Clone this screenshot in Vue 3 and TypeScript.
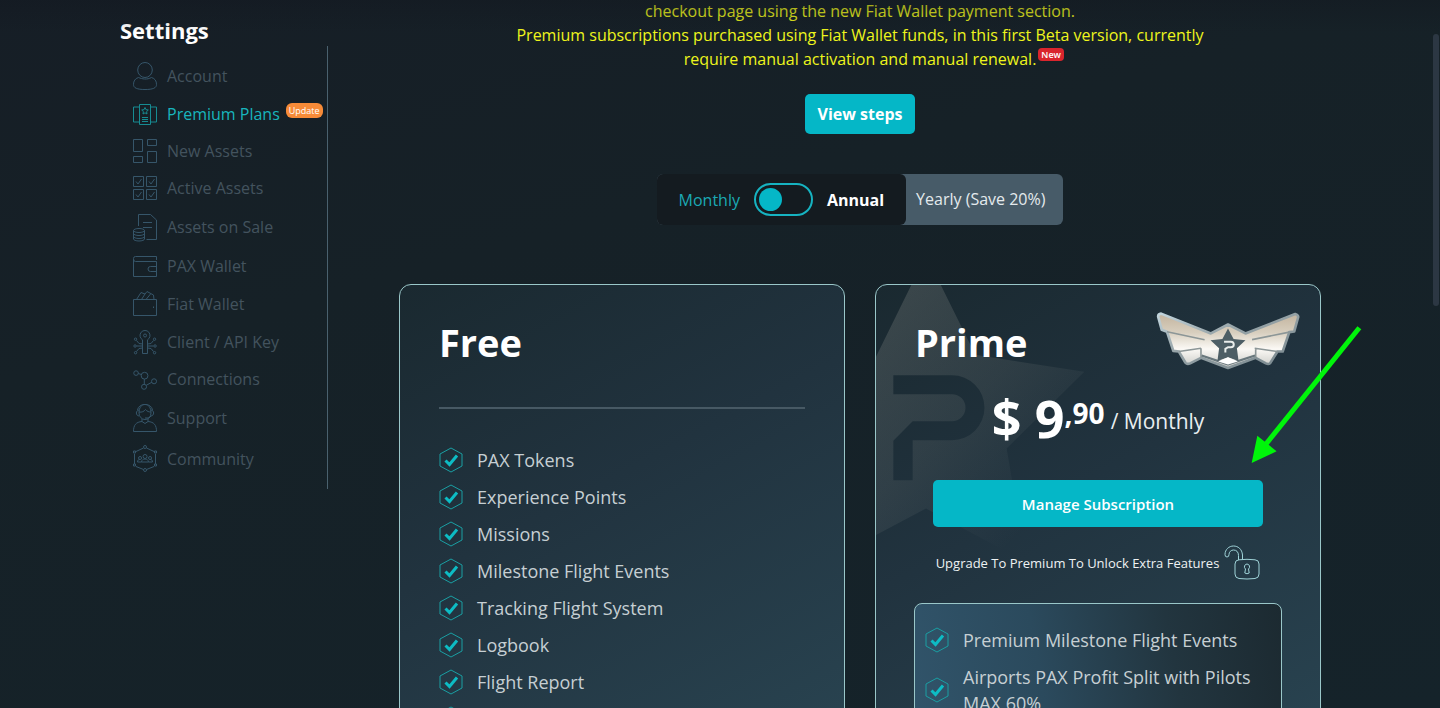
<script setup lang="ts">
import { ref } from 'vue'

interface MenuItem {
  label: string
  height: number
  paths: string[]
  active?: boolean
  badge?: string
}

const menu: MenuItem[] = [
  {
    label: 'Account',
    height: 28,
    paths: ['M12 .5a7.3 7.5 0 1 0 0 15a7.3 7.5 0 1 0 0-15z', 'M5.5 15.5C2 16.5.5 19 .5 22.500C.5 26 4 27.500 12 27.500S23.500 26 23.500 22.500C23.500 19 22 16.500 18.500 15.500C14 18 9 17 5.500 15.500z'],
  },
  {
    label: 'Premium Plans',
    height: 21,
    active: true,
    badge: 'Update',
    paths: [
      'M6.500 .5h11v20h-11z',
      'M6.500 3h-6v15h6M17.500 3h6v15h-6',
      'M12 3.500l1 2.200 2.300.3-1.700 1.600.4 2.400-2-1.200-2 1.200.4-2.400L8.700 6l2.300-.3z',
      'M9 13.500h6M9 15.500h6M9 17.500h6',
    ],
  },
  { label: 'New Assets', height: 24, paths: ['M.5.5h9v12h-9zM14.500.5h9v6h-9zM.5 17.500h9v6h-9zM14.500 12.500h9v11h-9z'] },
  {
    label: 'Active Assets',
    height: 24,
    paths: [
      'M.5.5h10v10h-10zM13.500.5h10v10h-10zM.5 13.500h10v10h-10zM13.500 13.500h10v10h-10z',
      'M3 5.500l2 2.500 3.500-5M16 5.500l2 2.500 3.500-5M3 18.500l2 2.500 3.500-5M16 18.500l2 2.500 3.500-5',
    ],
  },
  {
    label: 'Assets on Sale',
    height: 29,
    paths: [
      'M5.500 13V1.500h12l6 5.500v19.500H13.500M10 9.500h9M10 14.500h9',
      'M.5 17.500a5.500 2 0 0 1 11 0a5.500 2 0 0 1-11 0v8.500a5.500 2 0 0 0 11 0v-8.500M.5 20.500a5.500 2 0 0 0 11 0M.5 23.500a5.500 2 0 0 0 11 0',
    ],
  },
  { label: 'PAX Wallet', height: 21, paths: ['M23.500 4V.5H2.500Q.5.5.5 2.500v18h23V5.500H2.500Q.5 5.500.5 3', 'M23.500 10.500h-6a2 2 0 0 0 0 5h6'] },
  { label: 'Fiat Wallet', height: 26, paths: ['M.5 8.500h23v16H.5z', 'M3.500 8.500L8 1.500l4 1.500 2-2.500 6.500 3.500L21 8.500M12 3L8.500 8.500M17.500 3L13 8.500M20.500 15.500v1.500'] },
  {
    label: 'Client / API Key',
    height: 25,
    paths: [
      'M9.500 9.800a5 5 0 1 1 5 0V23.500h-5zM12 4a1.500 1.500 0 1 0 .1 3a1.500 1.500 0 1 0-.1-3',
      'M9.500 14L6 13.500 3.500 10.500M9.500 16H3.500M9.500 18L6 18.500 3.500 21.500M14.500 14l3.500-.5 2.500-3M14.500 16h6M14.500 18l3.500.5 2.500 3',
      'M2.500 8a1.200 1.200 0 1 0 .1 2.400a1.200 1.200 0 1 0-.1-2.400M2 14.800a1.200 1.200 0 1 0 .1 2.400a1.200 1.200 0 1 0-.1-2.400M2.500 21.500a1.200 1.200 0 1 0 .1 2.400a1.200 1.200 0 1 0-.1-2.400M21.500 8a1.200 1.200 0 1 0 .1 2.400a1.200 1.200 0 1 0-.1-2.400M22 14.800a1.200 1.200 0 1 0 .1 2.400a1.200 1.200 0 1 0-.1-2.400M21.500 21.500a1.200 1.200 0 1 0 .1 2.400a1.200 1.200 0 1 0-.1-2.400',
    ],
  },
  {
    label: 'Connections',
    height: 20,
    paths: [
      'M3 .8a2.300 2.300 0 1 0 .1 4.600A2.300 2.300 0 1 0 3 .8M11.500 2.300a3.400 3.400 0 1 0 .1 6.800a3.400 3.400 0 1 0-.1-6.800M21 8.800a2.500 2.500 0 1 0 .1 5a2.500 2.500 0 1 0-.1-5M11 14.300a2.500 2.500 0 1 0 .1 5a2.500 2.500 0 1 0-.1-5',
      'M5.300 3.500l3 1M11.300 9v5.300M18.800 12.300l-5.600 3',
    ],
  },
  {
    label: 'Support',
    height: 28,
    paths: [
      'M6 9a6 6.500 0 0 0 12 0C18 3.500 15.500.5 12 .5S6 3.500 6 9M6 8c3 .5 5-.5 6.500-2.500C14 7.500 16 8 18 8',
      'M6 6C2.500 6.500 2.500 11.500 6 12M18 6c3.500.5 3.500 5.500 0 6l-2 2h-4M4.500 6C5.500-1.500 18.500-1.500 19.500 6',
      'M9 15v2.500C3 18 .5 21 .5 27.500h23C23.500 21 21 18 15 17.500V15M9 17.500l3 2 3-2',
    ],
  },
  {
    label: 'Community',
    height: 28,
    paths: [
      'M10.500 3L3 6.500M1.500 9v10M3 21.500l7.500 3M13.500 24.500l7.500-3M22.500 19V9M21 6.500L13.500 3',
      'M12 .5a1.500 1.500 0 1 0 .1 3a1.500 1.500 0 1 0-.1-3M12 23.500a1.500 1.500 0 1 0 .1 3a1.500 1.500 0 1 0-.1-3M.5 6h2v2h-2zM21.500 6h2v2h-2zM.5 19h2v2h-2zM21.500 19h2v2h-2z',
      'M12 9.500a2 2 0 1 0 .1 4a2 2 0 1 0-.1-4M8.500 17c0-4 7-4 7 0zM7 11.500a1.500 1.500 0 1 0 .1 3a1.500 1.500 0 1 0-.1-3M8.500 17h-4c0-2 1-2.500 2.500-2.500M17 11.500a1.500 1.500 0 1 0 .1 3a1.500 1.500 0 1 0-.1-3M15.500 17h4c0-2-1-2.500-2.500-2.500',
    ],
  },
]

const freeFeatures: string[] = [
  'PAX Tokens',
  'Experience Points',
  'Missions',
  'Milestone Flight Events',
  'Tracking Flight System',
  'Logbook',
  'Flight Report',
  '',
]

const primeFeatures: string[] = ['Premium Milestone Flight Events', 'Airports PAX Profit Split with Pilots MAX 60%']

const annual = ref(false)
</script>

<template>
  <div class="page">
    <aside class="sidebar">
      <h1 class="sidebar-title">Settings</h1>
      <nav class="menu">
        <a v-for="item in menu" :key="item.label" href="#" class="menu-item" :class="{ active: item.active }">
          <svg class="menu-icon" width="24" :height="item.height" :viewBox="`0 0 24 ${item.height}`" aria-hidden="true">
            <path v-for="(d, i) in item.paths" :key="i" :d="d" />
          </svg>
          <span>{{ item.label }}</span>
          <span v-if="item.badge" class="badge-update">{{ item.badge }}</span>
        </a>
      </nav>
    </aside>

    <main class="content">
      <p class="notice">
        checkout page using the new Fiat Wallet payment section.<br />
        Premium subscriptions purchased using Fiat Wallet funds, in this first Beta version, currently require manual
        activation and manual renewal.<span class="badge-new">New</span>
      </p>
      <button type="button" class="btn steps">View steps</button>

      <div class="billing">
        <label class="period">
          <span class="monthly">Monthly</span>
          <input v-model="annual" type="checkbox" class="switch" />
          <span class="annual">Annual</span>
        </label>
        <span class="saving">Yearly (Save 20%)</span>
      </div>

      <div class="plans">
        <section class="card">
          <h2 class="plan-name">Free</h2>
          <hr class="rule" />
          <ul class="features">
            <li v-for="(feature, i) in freeFeatures" :key="i">
              <svg class="check" viewBox="0 0 24 26" width="24" height="26" aria-hidden="true">
                <path class="hex" d="M12 1l11 6v12l-11 6-11-6V7z" />
                <path class="tick" d="M6.500 13.500l4 4 7.500-9" />
              </svg>
              <span>{{ feature }}</span>
            </li>
          </ul>
        </section>

        <section class="card">
          <div class="watermark">
            <svg viewBox="20 45 660 860" width="220" height="287" aria-hidden="true">
              <defs>
                <linearGradient id="starFade" x1="20" y1="150" x2="560" y2="680" gradientUnits="userSpaceOnUse">
                  <stop offset="0" stop-color="#b8b8b0" stop-opacity=".2" />
                  <stop offset=".5" stop-color="#b0b0a8" stop-opacity=".12" />
                  <stop offset="1" stop-color="#a0a8a8" stop-opacity="0" />
                </linearGradient>
              </defs>
              <path
                fill="url(#starFade)"
                fill-rule="evenodd"
                d="M170-45L318 254 645 305 412 535 470 876 170 715-140 880V580L20 260zM72 315H248a97.500 97.500 0 0 1 0 195H130V630H72V512L130 453H248a40 40 0 0 0 0-81H72z"
              />
            </svg>
          </div>
          <svg class="wings" viewBox="106 94 438 176" width="146" height="58" aria-hidden="true">
            <defs>
              <linearGradient id="metal" x1="0" y1="0" x2="0" y2="1">
                <stop offset="0" stop-color="#c3b49e" />
                <stop offset=".35" stop-color="#d8cfbf" />
                <stop offset=".65" stop-color="#fbf9f5" />
                <stop offset="1" stop-color="#c8c9c5" />
              </linearGradient>
              <linearGradient id="rim" x1="0" y1="0" x2="1" y2="1">
                <stop offset="0" stop-color="#c2d5dd" />
                <stop offset=".4" stop-color="#98a5a9" />
                <stop offset="1" stop-color="#76858b" />
              </linearGradient>
            </defs>
            <path
              fill="url(#metal)"
              stroke="url(#rim)"
              stroke-width="8"
              stroke-linejoin="round"
              d="M122 99L273 159 325 132 378 159 529 100Q541 104 537 113L526 153 511 155 491 214 475 214 453 249Q448 254 440 250L409 233 325 264 243 233 210 250Q201 254 196 248L176 214 159 212 140 154 124 148 113 108Q113 100 122 99z"
            />
            <g fill="none" stroke="#8c9697" stroke-width="5" stroke-linejoin="round">
              <path d="M140 154L254 178M176 214L243 204M511 155L398 178M475 214L406 204M243 204V233M409 204V233" />
              <path stroke="#68777c" stroke-width="7" d="M245 226L325 253 407 226" />
            </g>
            <path fill="#4d5e65" d="M325 144L342 176 378 180 352 204 357 243 325 231 293 243 298 204 272 180 308 176z" />
            <path fill="#fff" d="M295 244L325 231 355 244 325 253z" />
            <path fill="none" stroke="#e9edeb" stroke-width="6" d="M313 184H334a8 8 0 0 1 0 17H325L317 206V217" />
          </svg>

          <h2 class="plan-name">Prime</h2>
          <p class="price">
            <strong class="amount">$ 9</strong><strong class="cents">,90</strong><span class="per">/ Monthly</span>
          </p>
          <button type="button" class="btn manage">Manage Subscription</button>
          <p class="unlock">
            <span>Upgrade To Premium To Unlock Extra Features</span>
            <svg width="36" height="36" viewBox="0 0 36 36" aria-hidden="true">
              <path d="M11 19Q11 15 15 14.800Q23 13.800 31 14.800Q35 15 35 19V29Q35 33 31 33.500Q23 34.500 15 33.500Q11 33 11 29z" />
              <path d="M18.500 14.500V10C18 4 14 1 9.500 1C5 1 1 4.500 1 9.500Q1 12 3 12Q5 12 5 9.500C5 7 7 5 9.500 5C12.500 5 14.500 7 14.500 10.500V15" />
              <path d="M23 19a2.800 2.800 0 0 0-1.500 5L20.800 28q2.200 1.500 4.400 0L24.500 24A2.800 2.800 0 0 0 23 19z" />
            </svg>
          </p>
          <div class="extras">
            <ul class="features">
              <li v-for="feature in primeFeatures" :key="feature">
                <svg class="check" viewBox="0 0 24 26" width="24" height="26" aria-hidden="true">
                  <path class="hex" d="M12 1l11 6v12l-11 6-11-6V7z" />
                  <path class="tick" d="M6.500 13.500l4 4 7.500-9" />
                </svg>
                <span>{{ feature }}</span>
              </li>
            </ul>
          </div>
          <svg class="pointer" viewBox="394 134 334 418" width="111" height="139" aria-hidden="true">
            <path fill="none" stroke="#00f50a" stroke-width="15" d="M720 142L436 496" />
            <path fill="#00f50a" d="M396 549L413 467 471 514z" />
          </svg>
        </section>
      </div>
    </main>
    <div class="top-shade"></div>
    <div class="scroll-thumb"></div>
  </div>
</template>

<style>
body {
  margin: 0;
  background: #162229;
}
</style>

<style scoped>
.page {
  position: relative;
  box-sizing: border-box;
  height: 100vh;
  overflow: hidden;
  display: flex;
  align-items: flex-start;
  gap: 71px;
  padding: 0 119px 0 120px;
  background: linear-gradient(165deg, #161e26 0%, #162127 35%, #15232a 100%);
  color: #fff;
  font-family: 'Open Sans', 'Noto Sans', sans-serif;
  font-size: 16px;
}
.top-shade {
  position: absolute;
  inset: 0 0 auto;
  height: 32px;
  background: linear-gradient(rgba(18, 23, 31, 0.4), rgba(18, 23, 31, 0));
  pointer-events: none;
}
.scroll-thumb {
  position: absolute;
  top: 34px;
  right: 1px;
  width: 6px;
  height: 272px;
  border-radius: 3px;
  background: #2c3743;
}
.sidebar {
  flex: 0 0 208px;
}
.sidebar-title {
  margin: 0;
  padding-top: 15px;
  height: 31px;
  line-height: 31px;
  font-size: 22px;
  font-weight: 700;
}
.menu {
  box-sizing: border-box;
  height: 443px;
  padding: 16px 0 0 13px;
  border-right: 1px solid #4a616e;
  display: flex;
  flex-direction: column;
  gap: 13px;
}
.menu-item {
  display: flex;
  align-items: center;
  gap: 10px;
  min-height: 23px;
  line-height: 23px;
  color: #43535e;
  text-decoration: none;
  white-space: nowrap;
}
.menu-item.active {
  color: #18b5bd;
}
.menu-icon {
  flex: none;
  fill: none;
  stroke: #36566a;
  stroke-width: 1;
}
.active .menu-icon {
  stroke: #168b92;
}
.badge-update {
  margin: -8px 0 0 -4px;
  padding: 0 3px;
  border-radius: 6px;
  background: #f78b38;
  color: #fff;
  font-size: 9px;
  line-height: 15px;
}
.content {
  flex: 1;
  min-width: 0;
  display: flex;
  flex-direction: column;
  align-items: center;
}
.notice {
  margin: -1px 0 0;
  max-width: 700px;
  text-align: center;
  line-height: 24px;
  color: #eef51c;
}
.badge-new {
  position: absolute;
  margin: 1px 0 0 2px;
  padding: 0 3px;
  border-radius: 4px;
  background: #d9252d;
  color: #fff;
  font-size: 9px;
  font-weight: 600;
  line-height: 13px;
}
.btn {
  border: 0;
  border-radius: 5px;
  background: #05b7c7;
  color: #fff;
  font-family: inherit;
  font-weight: 700;
  cursor: pointer;
}
.steps {
  margin-top: 23px;
  height: 40px;
  padding: 0 12px;
  font-size: 16px;
}
.billing {
  display: flex;
  margin-top: 40px;
  height: 51px;
  border-radius: 6px;
  background: #475b68;
}
.period {
  display: flex;
  align-items: center;
  gap: 14px;
  padding: 0 22px;
  border-radius: 6px;
  background: #141b20;
}
.monthly {
  color: #1ba9b4;
}
.annual {
  font-weight: 700;
}
.switch {
  appearance: none;
  box-sizing: border-box;
  display: flex;
  align-items: center;
  width: 59px;
  height: 33px;
  margin: 0;
  padding: 0 3px;
  border: 2px solid #16b3c1;
  border-radius: 17px;
}
.switch::before {
  content: '';
  width: 23px;
  height: 23px;
  border-radius: 50%;
  background: #05b7c7;
}
.switch:checked {
  justify-content: flex-end;
}
.saving {
  padding: 0 18px 0 10px;
  line-height: 51px;
  color: #e4eaed;
}
.plans {
  align-self: stretch;
  display: grid;
  grid-template-columns: 1fr 1fr;
  gap: 30px;
  margin-top: 59px;
}
.card {
  position: relative;
  box-sizing: border-box;
  border: 1px solid #9ac7c9;
  border-radius: 12px;
  padding: 30px 38px 40px;
  background: linear-gradient(152deg, #1a2930 0%, #21333f 42%, #28424f 90%);
}
.plan-name {
  position: relative;
  margin: 0 1px;
  line-height: 54px;
  font-size: 38px;
  font-weight: 700;
}
.rule {
  margin: 38px 1px 0;
  border: 0;
  height: 2px;
  background: #475964;
}
.features {
  list-style: none;
  margin: 0;
  padding: 0;
  display: flex;
  flex-direction: column;
  gap: 11px;
  font-size: 18px;
  line-height: 26px;
  color: #c6cfd3;
}
.rule + .features {
  margin: 38px 1px 0;
}
.features li {
  display: flex;
  align-items: center;
  gap: 14px;
  min-height: 26px;
}
.check {
  flex: none;
  fill: none;
}
.hex {
  stroke: #1a9fa3;
  stroke-width: 1;
}
.tick {
  stroke: #0dbcc4;
  stroke-width: 3;
}
.watermark {
  position: absolute;
  inset: 0;
  overflow: hidden;
  border-radius: 11px;
}
.wings {
  position: absolute;
  top: 27px;
  right: 19px;
}
.price {
  position: relative;
  display: flex;
  align-items: flex-start;
  justify-content: center;
  margin: 16px 0 0;
  line-height: 66px;
  white-space: pre;
}
.amount {
  font-size: 52px;
}
.cents {
  font-size: 28px;
  line-height: 56px;
}
.per {
  margin-left: 6px;
  font-size: 21px;
  line-height: 73px;
  color: #e8eef0;
}
.manage {
  position: relative;
  display: block;
  width: calc(100% - 38px);
  height: 47px;
  margin: 22px auto 0;
  font-size: 15px;
  font-weight: 600;
}
.unlock {
  position: relative;
  display: flex;
  align-items: center;
  justify-content: center;
  gap: 5px;
  margin: 18px 0 0;
  font-size: 13px;
  color: #eef2f3;
}
.unlock svg {
  flex: none;
  fill: none;
  stroke: #9fd3d8;
  stroke-width: 1;
}
.extras {
  position: relative;
  margin-top: 22px;
  padding: 23px 10px;
  border: 1px solid #9ac7c9;
  border-radius: 8px;
  background: linear-gradient(80deg, #31546a 0%, #2b4a5d 35%, #22353f 70%, #1c2a31 100%);
}
.pointer {
  position: absolute;
  top: 40px;
  right: -42px;
}
</style>
